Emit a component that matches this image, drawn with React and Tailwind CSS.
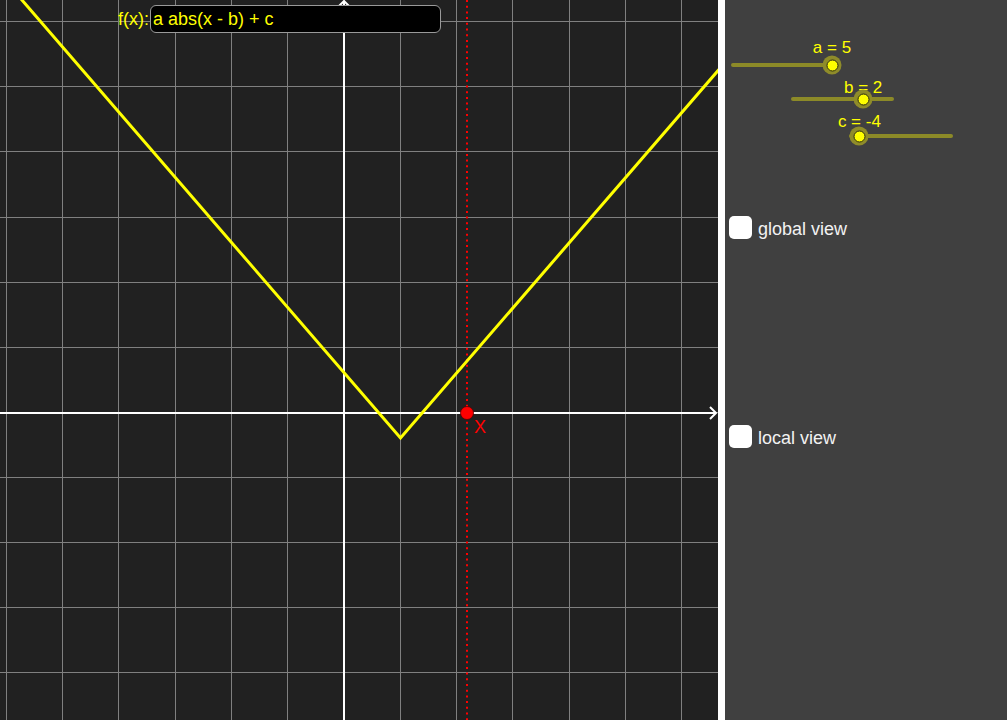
import React from 'react'

const W = 718
const H = 720
const OX = 344
const OY = 413
const GX = 56.3
const GY = 65.1

const VX = 400.5
const VY = 438
const SLOPE = 1.157

const gridX = []
for (let k = -6; k <= 6; k++) gridX.push(Math.floor(OX + k * GX) + 0.5)
const gridY = []
for (let k = -6; k <= 4; k++) gridY.push(Math.floor(OY - 0.7 + k * GY) + 0.5)

const Graph = () => {
  const yAt = (x) => VY - Math.abs(x - VX) * SLOPE
  return (
    <svg width={W} height={H} className="block">
      <rect width={W} height={H} fill="#212121" />
      {gridX.map((x) => (
        <line key={'x' + x} x1={x} y1={0} x2={x} y2={H} stroke="#808080" strokeWidth="1" />
      ))}
      {gridY.map((y) => (
        <line key={'y' + y} x1={0} y1={y} x2={W} y2={y} stroke="#808080" strokeWidth="1" />
      ))}
      {/* axes */}
      <line x1={0} y1={OY} x2={715} y2={OY} stroke="#ffffff" strokeWidth="2" />
      <polyline points={`710,407 716,${OY} 710,419`} fill="none" stroke="#ffffff" strokeWidth="2" />
      <line x1={OX} y1={1} x2={OX} y2={H} stroke="#ffffff" strokeWidth="2" />
      <polyline points={`338,7 ${OX},1 350,7`} fill="none" stroke="#ffffff" strokeWidth="2" />
      {/* dotted x = X line */}
      <line x1={467} y1={0} x2={467} y2={H} stroke="#ff0000" strokeWidth="2" strokeDasharray="2 3.7" />
      {/* function */}
      <polyline
        points={`-10,${yAt(-10)} ${VX},${VY} ${W + 10},${yAt(W + 10)}`}
        fill="none"
        stroke="#ffff00"
        strokeWidth="3"
      />
      {/* point X */}
      <circle cx={467} cy={OY} r={6.5} fill="#ff0000" stroke="#5a0000" strokeWidth="0.8" />
      <text x={474} y={433} fill="#ff0000" fontSize="18" fontFamily="'Liberation Sans', Arial, sans-serif">
        X
      </text>
    </svg>
  )
}

// slider with range -5..5, thumb placed from its value
const Slider = ({ name, value, className, trackClass }) => {
  const pct = ((value + 5) / 10) * 100
  return (
    <div className={`flex flex-col ${className}`}>
      <div className="relative h-[20px]">
        <span
          className="absolute top-0 -translate-x-1/2 whitespace-nowrap text-[17px] leading-[20px] text-[#ffff00]"
          style={{ left: `${pct}%` }}
        >
          {name} = {value}
        </span>
      </div>
      <div className={`relative h-[4px] rounded-full bg-[#8c8a28] ${trackClass}`}>
        <div
          className="absolute top-1/2 w-[19px] h-[19px] -translate-x-1/2 -translate-y-1/2 rounded-full bg-[#8f8c2a] flex items-center justify-center"
          style={{ left: `${pct}%` }}
        >
          <div className="w-[12px] h-[12px] rounded-full bg-[#ffff00] border border-[#2a2a10]" />
        </div>
      </div>
    </div>
  )
}

const Checkbox = ({ label }) => (
  <div className="flex items-center gap-[6px]">
    <div className="w-[23px] h-[23px] rounded-[5px] bg-white" />
    <span className="text-[18px] leading-[20px] pt-[2px] text-[#f2f2f2]">{label}</span>
  </div>
)

export default function App() {
  return (
    <div
      className="flex w-[1007px] h-[720px] overflow-hidden bg-[#404040]"
      style={{ fontFamily: "'Liberation Sans', Arial, sans-serif" }}
    >
      <div className="relative w-[718px] h-[720px] shrink-0">
        <Graph />
        <div className="absolute left-[118px] top-[5px] flex items-center">
          <span className="text-[18px] leading-[28px] text-[#ffff00]">f(x):</span>
          <div className="ml-[1px] w-[291px] h-[28px] rounded-[6px] bg-black border border-[#9a9a9a] pl-[2px] text-[18px] leading-[26px] text-[#ffff00]">
            a abs(x - b) + c
          </div>
        </div>
      </div>

      <div className="w-[7px] h-[720px] bg-white shrink-0" />

      <div className="flex-1 h-[720px] flex flex-col bg-[#404040]">
        <Slider name="a" value={5} className="ml-[6px] w-[101px] mt-[38px]" trackClass="mt-[5px]" />
        <Slider name="b" value={2} className="ml-[66px] w-[103px] mt-[11px]" trackClass="-mt-[1px]" />
        <Slider name="c" value={-4} className="ml-[124px] w-[104px] mt-[11px]" trackClass="mt-[2px]" />

        <div className="flex flex-col gap-[186px] pl-[4px] mt-[78px]">
          <Checkbox label="global view" />
          <Checkbox label="local view" />
        </div>
      </div>
    </div>
  )
}
